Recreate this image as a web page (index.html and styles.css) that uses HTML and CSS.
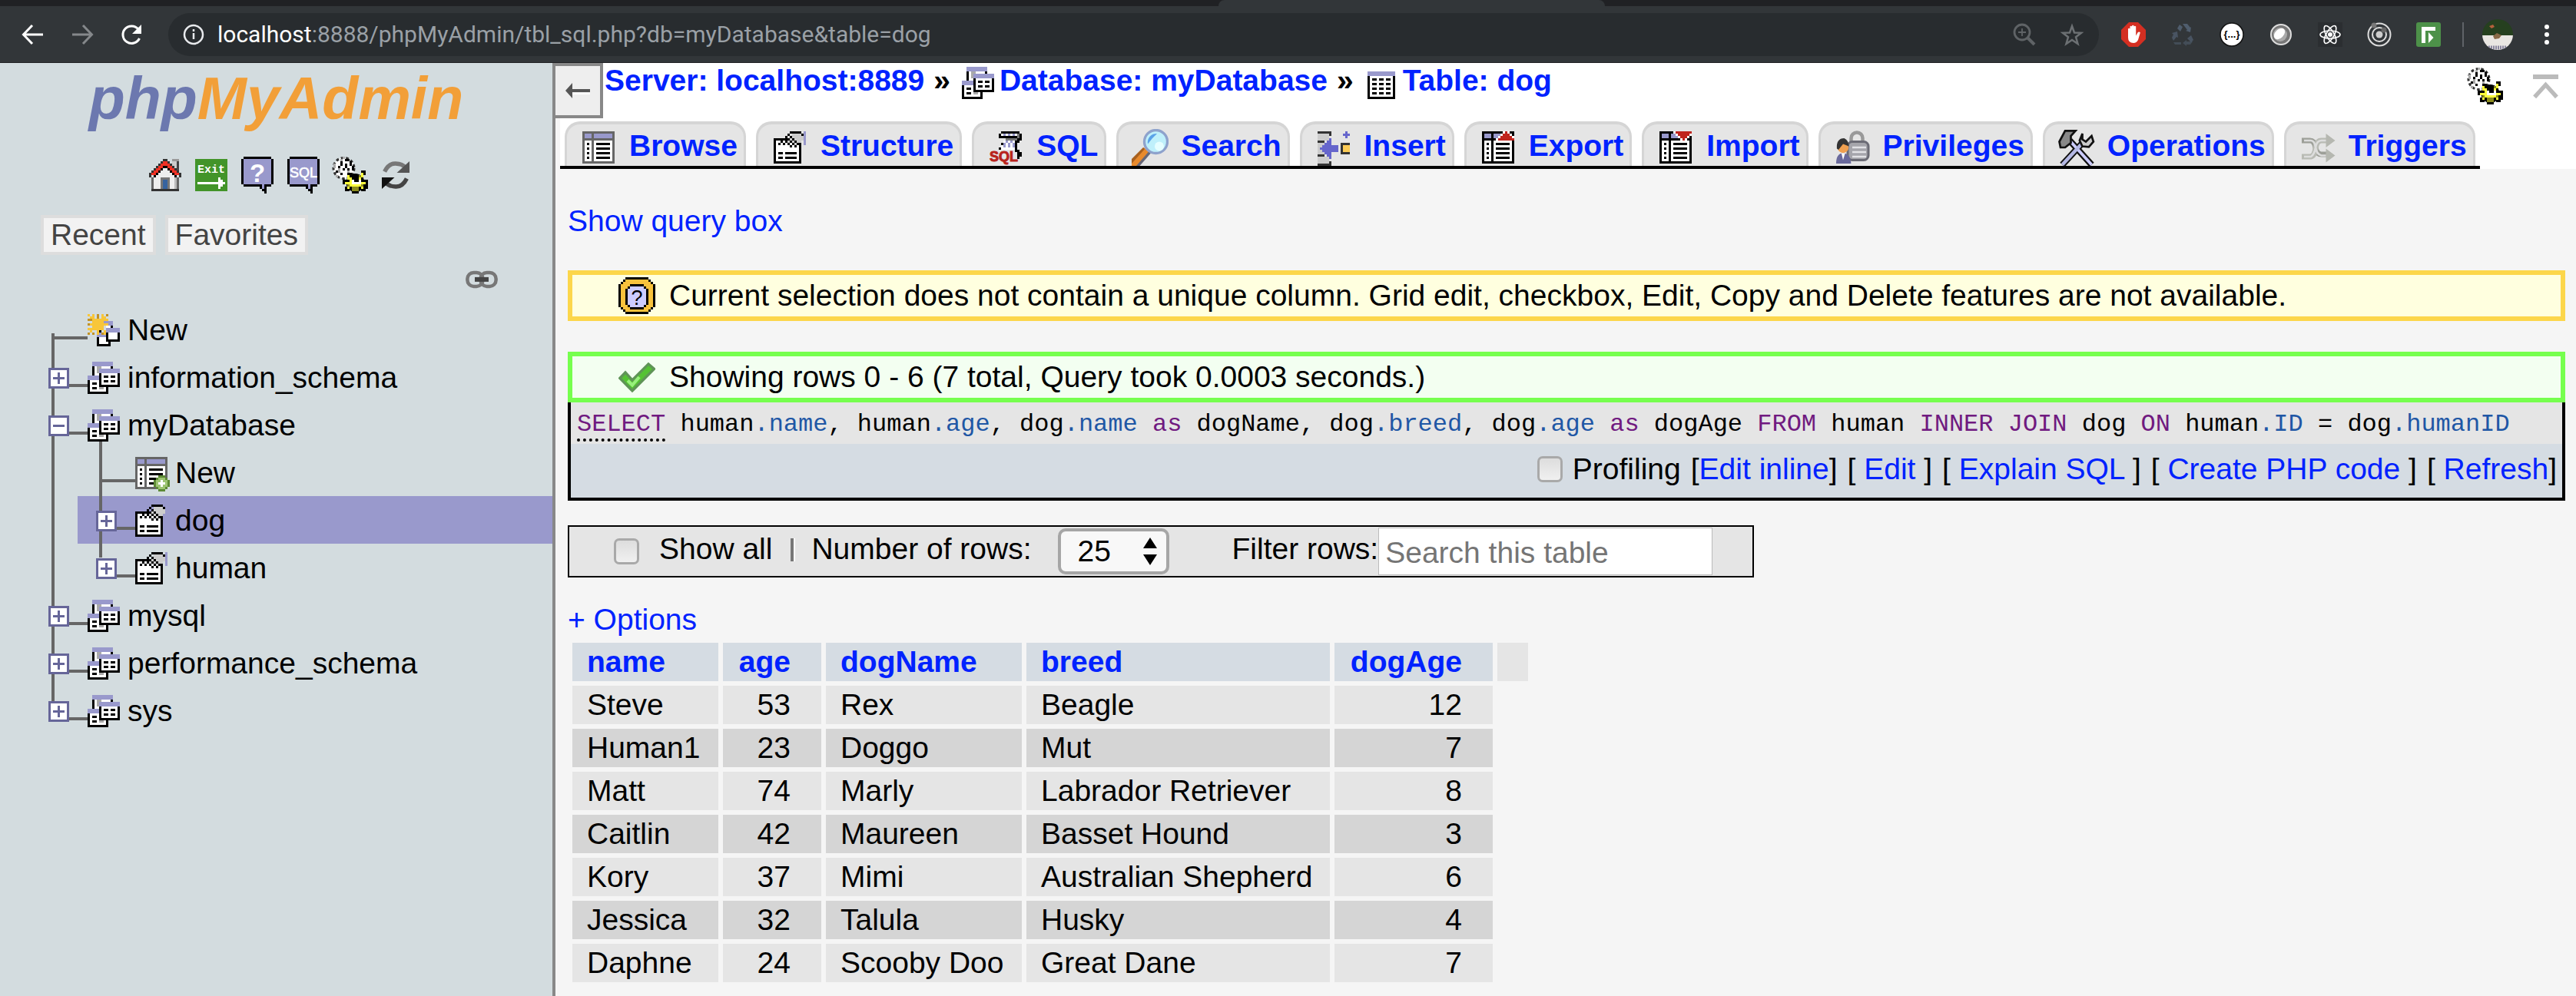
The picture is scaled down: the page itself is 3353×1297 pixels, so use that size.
FILE: index.html
```html
<!DOCTYPE html>
<html lang="en">
<head>
<meta charset="utf-8">
<title>localhost:8889 / myDatabase / dog | phpMyAdmin</title>
<link rel="stylesheet" href="styles.css">
</head>
<body>
<svg class="sprites" aria-hidden="true" shape-rendering="crispEdges">
  <symbol id="i-db" viewBox="0 0 16 16">
    <path fill="#000" d="M3 3h9v5H3zM1 9h9v6H1z"/>
    <path fill="#fff" d="M4 3h7v5H4z"/>
    <path fill="#aaa" d="M5 3h2v1H6v2H5z"/>
    <path fill="#fff" d="M2 9h7v5H2z"/>
    <path fill="#99c" d="M3 1h9v2H3zM1 7h5v2H1z"/>
    <path fill="#aaa" d="M6 11h2v2H6z"/>
    <path d="M3 10h2v1H3zM3 12h2v1H3zM6 6h9v6H6z"/>
    <path fill="#fff" d="M7 6h7v5H7z"/>
    <path fill="#99c" d="M6 4h9v2H6z"/>
    <path d="M8 7h2v1H8zM11 7h2v1h-2zM8 9h2v1H8zM11 9h2v1h-2z"/>
  </symbol>
  <symbol id="i-newdb" viewBox="0 0 16 16">
    <path fill="#99c" d="M8 4h4v2H8zM5 9h5v2H5z"/>
    <path d="M11 6h1v1h-1zM5 11h6v4H5z"/>
    <path fill="#fff" d="M9 6h2v1H9zM6 11h4v3H6z"/>
    <path d="M9 8h6v5H9z"/>
    <path fill="#fff" d="M10 9h4v3h-4z"/>
    <path fill="#99c" d="M9 7h6v2H9z"/>
    <path fill="#f8c63a" d="M3 3h5v5H3zM5 1h1v9H5zM1 5h9v1H1zM1 1h1v1H1zM2 2h1v1H2zM8 2h1v1H8zM2 8h1v1H2zM8 8h1v2H8zM3 1h1v2H3zM7 1h1v2H7zM1 7h2v1H1zM8 3h2v1H8z"/>
    <path fill="#c29224" d="M9 1h1v1H9zM1 3h2v1H1zM1 9h1v1H1zM3 9h1v1H3zM7 9h1v1H7zM5 1h1v2H5zM1 5h1v1H1z"/>
    <path d="M6 8h1v1H6z"/>
  </symbol>
  <symbol id="i-grid" viewBox="0 0 16 16">
    <path fill="#666" d="M1 1h14v14H1z"/>
    <path fill="#99c" d="M2 2h3v2H2zM6 2h8v2H6z"/>
    <path fill="#fff" d="M2 5h3v9H2zM6 5h8v9H6z"/>
    <path d="M3 6h1v1H3zM3 8h1v1H3zM3 10h1v1H3zM3 12h1v1H3zM7 6h6v1H7zM7 8h6v1H7zM7 10h6v1H7zM7 12h6v1H7z"/>
  </symbol>
  <symbol id="i-newtbl" viewBox="0 0 16 16">
    <use href="#i-grid"/>
    <path fill="#5d8a35" d="M11 9h3v1h1v1h1v3h-1v1h-1v1h-3v-1h-1v-1H9v-3h1v-1h1z"/>
    <path fill="#9dc472" d="M11 10h3v1h1v3h-1v1h-3v-1h-1v-3h1z"/>
    <path fill="#fff" d="M12 11h1v1h1v1h-1v1h-1v-1h-1v-1h1z"/>
  </symbol>
  <symbol id="i-struct" viewBox="0 0 16 16">
    <path fill="#99c" d="M14 1h1v6h-1z"/>
    <path d="M1 4h12v11H1z"/>
    <path fill="#fff" d="M2 5h10v9H2z"/>
    <path fill="#ccc" d="M9 2h5v3h-1v1h-2v1H9V6H7V4h1V3h1z"/>
    <path d="M8 1h5v1H8zM7 2h1v1H7zM6 3h1v1H6zM13 2h1v1h-1zM5 4h1v1H5zM4 5h1v1H4zM3 6h1v1H3zM6 5h1v1H6zM5 6h1v1H5zM7 4h1v1H7zM8 5h1v1H8zM9 4h1v1H9zM10 5h1v1h-1zM7 6h1v1H7zM9 6h1v1H9zM11 6h1v1h-1zM8 7h1v1H8zM10 7h1v1h-1zM12 6h1v1h-1zM8 3h1v1H8z"/>
    <path d="M3 10h2v1H3zM6 10h5v1H6zM3 12h2v1H3zM6 12h5v1H6z"/>
  </symbol>
  <symbol id="i-table" viewBox="0 0 16 16">
    <path d="M2 4h12v11H2z"/>
    <path fill="#99c" d="M2 3h12v2H2z"/>
    <path fill="#fff" d="M3 5h10v9H3z"/>
    <path d="M4 6h2v1H4zM7 6h2v1H7zM10 6h2v1h-2zM4 8h2v1H4zM7 8h2v1H7zM10 8h2v1h-2zM4 10h2v1H4zM7 10h2v1H7zM10 10h2v1h-2zM4 12h2v1H4zM7 12h2v1H7zM10 12h2v1h-2z"/>
  </symbol>
  <symbol id="i-home" viewBox="0 0 16 16">
    <path fill="#999" d="M11 1h3v1h-3z"/>
    <path fill="#ccc" d="M11 2h2v4h-2z"/>
    <path fill="#444" d="M13 2h1v5h-1z"/>
    <path fill="#eee" d="M7 5h2v1h1v1h1v1h1v1h1v5H3V9h1V8h1V7h1V6h1z"/>
    <path fill="#bbb" d="M12 9h1v5h-1z"/>
    <path fill="#666" d="M2 9h1v5H2zM13 9h1v5h-1z"/>
    <path fill="#333" d="M2 14h12v1H2zM7 1h2v1H7zM6 2h1v1H6zM9 2h1v1H9zM5 3h1v1H5zM10 3h1v1h-1zM4 4h1v1H4zM11 4h1v1h-1zM3 5h1v1H3zM12 5h1v1h-1zM2 6h1v1H2zM13 6h1v1h-1zM1 7h1v2H1zM14 7h1v2h-1z"/>
    <path d="M7 4h2v1H7zM6 5h1v1H6zM9 5h1v1H9zM5 6h1v1H5zM10 6h1v1h-1zM4 7h1v1H4zM11 7h1v1h-1zM3 8h1v1H3zM12 8h1v1h-1z"/>
    <path fill="#ee3124" d="M7 2h2v2H7zM6 3h1v2H6zM9 3h1v2H9zM5 4h1v2H5zM10 4h1v2h-1zM4 5h1v2H4zM11 5h1v2h-1zM3 6h1v2H3zM12 6h1v2h-1zM2 7h1v1H2zM13 7h1v1h-1z"/>
    <path fill="#777" d="M6 9h4v5H6z"/>
    <path fill="#36639f" d="M7 10h2v4H7z"/>
  </symbol>
  <symbol id="i-exit" viewBox="0 0 16 16">
    <path fill="#429429" d="M1 1h14v14H1z"/>
    <text x="2" y="7" font-size="5" font-weight="bold" font-family="Liberation Mono, monospace" fill="#fff">Exit</text>
    <path fill="#fff" d="M2 11h9V9h1v1h1v1h1v1h-1v1h-1v1h-1v-2H2z"/>
  </symbol>
  <symbol id="i-bubble" viewBox="0 0 16 16">
    <path d="M2 0h12v1h1v11h-1v1h-2v3h-1v-1h-1v-1H9v-1H2v-1H1V1h1z"/>
    <path fill="#99c" d="M2 1h12v11h-3v2h-1v-2H2z"/>
  </symbol>
  <symbol id="i-doc" viewBox="0 0 16 16">
    <use href="#i-bubble"/>
    <text x="8" y="11" text-anchor="middle" font-size="11" font-weight="bold" font-family="Liberation Sans, sans-serif" fill="#fff">?</text>
  </symbol>
  <symbol id="i-sqldoc" viewBox="0 0 16 16">
    <use href="#i-bubble"/>
    <text x="8" y="9" text-anchor="middle" font-size="6" font-family="Liberation Sans, sans-serif" fill="#fff" stroke="#fff" stroke-width=".2">SQL</text>
  </symbol>
  <symbol id="i-gears" viewBox="0 0 16 16">
    <circle cx="5.500" cy="5" r="4.500" fill="#fff"/>
    <circle cx="5.500" cy="5" r="4.500" fill="none" stroke="#333" stroke-dasharray="1.200 1"/>
    <path fill="#aaa" d="M5 0h1v1H5zM1 3h1v2H1zM3 5h1v2H3zM4 1h1v1H4zM2 8h1v1H2zM7 6h1v1H7z"/>
    <path d="M4 2h1v2H4zM6 3h1v2H6zM8 2h1v2H8zM3 4h1v1H3zM5 5h1v1H5zM7 1h1v1H7zM2 6h1v1H2zM6 1h1v1H6zM9 4h1v2H9zM4 7h1v1H4zM7 5h1v1H7z"/>
    <circle cx="10.500" cy="11.300" r="4" fill="#000"/>
    <path d="M7 7h2v1h4V6h2v2h-1v2h2v4h-1v1h-2v-1h-1v2H9v-2H8v1H6v-2h1v-1H5v-2h2z"/>
    <path fill="#ffff3c" d="M7 8h1v1h1v1h3V9h1V7h1v2h-1v2h2v1h-2v1h1v1h-1v-1h-1v1h-2v-1H8v1H7v-1h1v-1H6v-1h2v-1H7z"/>
    <path fill="#8c8c1e" d="M9 13h3v2H9zM13 12h1v1h-1zM7 12h1v1H7zM12 8h1v1h-1z"/>
    <path fill="#fff" d="M9 10h1v1h2v-1h1v2H9z"/>
    <path d="M10 9h2v2h-2z"/>
  </symbol>
  <symbol id="i-refresh" viewBox="0 0 16 16">
    <g shape-rendering="geometricPrecision">
      <path d="M3.200 6.500Q5 2.800 8 3t4 1.500" fill="none" stroke="#777" stroke-width="1.800"/>
      <path d="M14 2v5H8.500z" fill="#555"/>
      <path d="M12.800 9.500Q11 13.200 8 13t-4-1.500" fill="none" stroke="#444" stroke-width="1.800"/>
      <path d="M2 9h5.500L2 14z" fill="#111"/>
    </g>
  </symbol>
  <symbol id="i-sql" viewBox="0 0 16 16">
    <path d="M6 1h8v1h1v3h-1v1h-1v3h1v1h1v2h-1v1h-1v-3h-1V7h-1V4H5V2h1z"/>
    <path fill="#fff" d="M6 2h7v1H6zM7 5h5v4H6V7h1z"/>
    <path fill="#777" d="M13 2h1v2h-1zM8 4h5v1H8z"/>
    <path fill="#99c" d="M7 2h1v1H7zM9 2h1v1H9zM11 2h1v1h-1zM8 5h1v1H8zM10 5h1v1h-1zM7 6h1v2H7zM9 6h1v2H9zM11 6h1v2h-1z"/>
    <path d="M6 6h1v1H6zM5 8h1v1H5zM12 5h1v3h-1z"/>
    <text x="1" y="14" font-size="6" font-family="Liberation Sans, sans-serif" fill="#b8231c" stroke="#b8231c" stroke-width=".3">SQL</text>
  </symbol>
  <symbol id="i-search" viewBox="0 0 16 16">
    <g shape-rendering="geometricPrecision">
      <path d="M0 13.500L5.300 8l2.200 2L3 16H0z" fill="#e88a2c"/>
      <path d="M2 16l5.500-6.300 .8 .8L3.500 16z" fill="#667"/>
      <path d="M0 13l5-5 .7 .7L0 15z" fill="#a8601e"/>
      <circle cx="10.500" cy="5.500" r="5" fill="#bff0fb" stroke="#8ea2cc" stroke-width="1.100"/>
      <path d="M7 6.500A3.800 3.800 0 0 1 11 2L9 4z" fill="#5aa2e8"/>
      <circle cx="12" cy="7.500" r="2" fill="#e6feff"/>
    </g>
  </symbol>
  <symbol id="i-insert" viewBox="0 0 16 16">
    <path fill="#ccc" d="M1 2h5v3H1zM1 12h5v3H1zM1 6h5v5H1z"/>
    <path fill="#333" d="M1 1h6v2H6V2H1zM1 5h3v1H1zM1 11h3v1H1zM6 14h1v2H1v-1h5z"/>
    <path fill="#66c" d="M2 8h1V7h1V6h1V5h1V4h1v3h3v3H7v3H6v-1H5v-1H4v-1H3V9H2zM13 1h1v1h1v1h-1v1h-1V3h-1V2h1z"/>
    <path fill="#333" d="M11 6h4v5h-4z"/>
    <path fill="#fbcb55" d="M12 7h3v3h-3z"/>
  </symbol>
  <symbol id="i-port" viewBox="0 0 16 16">
    <path d="M1 1h14v14H1z"/>
    <path fill="#99c" d="M2 2h3v2H2zM6 2h3v2H6z"/>
    <path fill="#fff" d="M2 5h3v9H2zM6 5h8v9H6z"/>
    <path d="M3 6h1v1H3zM3 8h1v1H3zM3 10h1v1H3zM3 12h1v1H3zM7 6h6v1H7zM7 8h6v1H7zM7 10h6v1H7zM7 12h6v1H7z"/>
  </symbol>
  <symbol id="i-export" viewBox="0 0 16 16">
    <use href="#i-port"/>
    <path fill="#fff" d="M8 3h1V2h1V1h3v1h1v1h1v2H7V4h1z"/>
    <path fill="#c0241c" d="M11 1h1v1h1v1h1v1h1v1H8V4h1V3h1V2h1z"/>
  </symbol>
  <symbol id="i-import" viewBox="0 0 16 16">
    <use href="#i-port"/>
    <path fill="#fff" d="M7 1h8v2h-1v1h-1v1h-1v1h-1V5h-1V4H9V3H8V2H7z"/>
    <path fill="#c0241c" d="M8 1h7v1h-1v1h-1v1h-1v1h-1V4h-1V3H9V2H8z"/>
  </symbol>
  <symbol id="i-priv" viewBox="0 0 16 16">
    <g shape-rendering="geometricPrecision">
      <path d="M7.500 6V4a2.500 2.500 0 0 1 5 0v2" fill="none" stroke="#999" stroke-width="1.500"/>
      <rect x="6" y="5.500" width="9" height="8" rx="2" fill="#a5a5ab" stroke="#6b6b75"/>
      <path d="M8 8h6M8 10h6M8 12h6" stroke="#e2e2e6" stroke-width=".8"/>
      <circle cx="4" cy="8" r="2.400" fill="#f0a050"/>
      <path d="M1.300 8.500Q1 4 4.500 4 6.500 5 6.500 7.500L4 6.500 2 9z" fill="#333"/>
      <path d="M1 15q0-4.500 3-4.500T7.500 15z" fill="#6a6a9c"/>
      <path d="M3.300 10.500h1.600L4 13.500z" fill="#fff"/>
    </g>
  </symbol>
  <symbol id="i-ops" viewBox="0 0 16 16">
    <g shape-rendering="geometricPrecision">
      <path d="M5 5l9.500 10.500M11.500 5L1.800 15.500" stroke="#111" stroke-width="2.800"/>
      <path d="M5 5l9.500 10.500" stroke="#ccf" stroke-width="1.300"/>
      <path d="M11.500 5L1.800 15.500" stroke="#b4b8e4" stroke-width="1.500"/>
      <path d="M.5 5.500L3 .8h4.500L5.500 3v3L3 8H1z" fill="#888" stroke="#111" stroke-width=".9"/>
      <path d="M10.500 2v2.500l1.500 1 2.500-2.500 .8 2.500-2 2.300-2.800-.3-1.200-2.500z" fill="#ccc" stroke="#111" stroke-width=".9"/>
    </g>
  </symbol>
  <symbol id="i-trig" viewBox="0 0 16 16">
    <g shape-rendering="geometricPrecision" fill="none" stroke="#9d9f98" stroke-width="2.400">
      <path d="M1 5h3.500q2 0 2.500 3t2.500 3H12"/>
      <path stroke="#b9bbb4" d="M1 12h3.500Q6.500 12 7 8.500T9.500 5H12"/>
      <path fill="#b5b7b0" stroke="none" d="M11.500 2l4 3-4 3zM11.500 8.500l4 3-4 3z"/>
      <path stroke="#ddd" stroke-width=".9" d="M2 5h3q1.500 0 2 3t2.500 3.500h2M2 12h3Q6.500 11 7 8t2.500-3h2"/>
    </g>
  </symbol>
  <symbol id="i-notice" viewBox="0 0 16 16">
    <path d="M3 0h10v1h1v1h1v1h1v10h-1v1h-1v1h-1v1H3v-1H2v-1H1v-1H0V3h1V2h1V1h1z"/>
    <path fill="#f8c23c" d="M3 1h10v1h1v1h1v10h-1v1h-1v1H3v-1H2v-1H1V3h1V2h1z"/>
    <path d="M5 3h6v1h1v1h1v7h-1v1h-1v1H5v-1H4v-1H3V5h1V4h1z"/>
    <path fill="#ccf" d="M5 4h6v1h1v7h-1v1H5v-1H4V5h1z"/>
    <text x="8" y="12" text-anchor="middle" font-size="9" font-family="Liberation Sans, sans-serif">?</text>
  </symbol>
  <symbol id="i-ok" viewBox="0 0 16 16">
    <g shape-rendering="geometricPrecision">
      <path d="M.6 8.500L3 6l3 3.300L13 2.300l2.500 2.200L6 14z" fill="#55c234" stroke="#5f9457" stroke-width="1.100"/>
      <path d="M4 9.500l2 2 3-3.500" fill="none" stroke="#98f07c" stroke-width="1.400"/>
    </g>
  </symbol>
  <symbol id="i-link" viewBox="0 0 16 16">
    <g shape-rendering="geometricPrecision" fill="none">
      <rect x="1.800" y="5.300" width="6.700" height="6" rx="2.700" stroke="#777" stroke-width="1.500"/>
      <rect x="7.500" y="5.300" width="6.700" height="6" rx="2.700" stroke="#777" stroke-width="1.500"/>
      <path d="M5 8.300h6" stroke="#444" stroke-width="2"/>
    </g>
  </symbol>
  <symbol id="i-top" viewBox="0 0 12 12">
    <path fill="#bbb" d="M0 1h11v2H0z"/>
    <path d="M.7 10.800L5.500 5.500l4.800 5.300" fill="none" stroke="#bbb" stroke-width="1.800" shape-rendering="geometricPrecision"/>
  </symbol>
</svg>

<header class="browser">
  <div class="tabstrip"><span class="active-tab"></span></div>
  <div class="toolbar">
    <button class="nav-btn" aria-label="Back"><svg viewBox="0 0 32 32"><path d="M29 16H4M15 4L3.500 16 15 28" fill="none" stroke="#fff" stroke-width="3"/></svg></button>
    <button class="nav-btn" aria-label="Forward"><svg viewBox="0 0 32 32"><path d="M3 16h25M17 4l11.500 12L17 28" fill="none" stroke="#85888b" stroke-width="3"/></svg></button>
    <button class="nav-btn" aria-label="Reload"><svg viewBox="0 0 32 32"><path d="M26.500 21A11.300 11.300 0 1 1 25 9" fill="none" stroke="#fff" stroke-width="3"/><path d="M29 3v12H17z" fill="#fff"/></svg></button>
    <div class="address">
      <svg class="ico32" viewBox="0 0 32 32"><circle cx="16" cy="16" r="12" fill="none" stroke="#e8eaed" stroke-width="2.500"/><path d="M16 14v8M16 9v3" stroke="#e8eaed" stroke-width="2.500"/></svg>
      <span class="url"><b>localhost</b>:8888/phpMyAdmin/tbl_sql.php?db=myDatabase&amp;table=dog</span>
      <svg class="ico32 zoomed" viewBox="0 0 32 32"><g fill="none" stroke="#5f6366" stroke-width="2.800"><circle cx="13" cy="13" r="10"/><path d="M20 20l9 9" stroke-width="4"/><path d="M13 8v10M8 13h10" stroke-width="1.800"/></g></svg>
      <svg class="ico32" viewBox="0 0 32 32"><path d="M16 5l3 8.500 9 .3-7 5.500 2.500 8.700-7.500-5-7.500 5 2.500-8.700-7-5.500 9-.3z" fill="none" stroke="#6c7073" stroke-width="2.500"/></svg>
    </div>
    <div class="exts">
      <svg viewBox="0 0 32 32"><path d="M10 0h12l10 10v12L22 32H10L0 22V10z" fill="#d42f22"/><path d="M9 8.500q1.300-1.300 2.500 0V5.500q1.300-1.500 2.500 0v-1q1.300-1.500 2.600 0v1q1.300-1.300 2.600 0v12l2.600-4.500q2-1 3 .5L22 23q-2 4-6 4-7 0-7-7z" fill="#fff"/></svg>
      <svg viewBox="0 0 32 32"><g fill="#4f5d6d"><path d="M9 8l3-5 4 3-3 6zM16 2h6l4 5 1-1-1 7-6-2 2-1z"/><path d="M2 14l7-2 1 8-2-1-4 5-2-4 2-4zM27 17l3 6-3 3-5-5z" opacity=".8"/><path d="M4 26h10v3H6zM16 27l5-4v2h8l-3 4h-5v2z" opacity=".6"/></g></svg>
      <svg viewBox="0 0 32 32"><circle cx="16" cy="16" r="15" fill="#fff" stroke="#111" stroke-width="1.500"/><text x="16" y="20" text-anchor="middle" font-size="13" font-weight="bold" font-family="Liberation Sans, sans-serif">{...}</text></svg>
      <svg viewBox="0 0 32 32"><circle cx="16" cy="16" r="13" fill="#777" stroke="#ddd" stroke-width="2"/><circle cx="15" cy="16" r="9" fill="#aaa"/><ellipse cx="14" cy="15" rx="5.500" ry="8.500" transform="rotate(45 14 15)" fill="#fff"/></svg>
      <svg viewBox="0 0 32 32"><path d="M0 0h32v32H0z" fill="#2b2e31"/><g fill="none" stroke="#fff" stroke-width="1.600"><ellipse cx="16" cy="16" rx="13" ry="5"/><ellipse cx="16" cy="16" rx="13" ry="5" transform="rotate(60 16 16)"/><ellipse cx="16" cy="16" rx="13" ry="5" transform="rotate(120 16 16)"/></g><circle cx="16" cy="16" r="3" fill="#fff"/></svg>
      <svg viewBox="0 0 32 32"><g fill="none" stroke="#ddd" stroke-width="2"><circle cx="16" cy="16" r="14.500"/><circle cx="16" cy="16" r="9"/></g><circle cx="16" cy="16" r="4.500" fill="#ccc"/><circle cx="9" cy="4" r="3.500" fill="#777"/><circle cx="22" cy="10" r="3.500" fill="#666"/></svg>
      <svg viewBox="0 0 32 32"><rect width="32" height="32" rx="3" fill="#4d9149"/><path d="M7 6h18v5H12v16H7z" fill="#fff"/><path d="M16 13l6.500 7-6.500 7z" fill="#fff"/></svg>
    </div>
    <span class="bar-divider"></span>
    <svg class="avatar" viewBox="0 0 40 40"><clipPath id="av"><circle cx="20" cy="20" r="20"/></clipPath><g clip-path="url(#av)"><path fill="#26401f" d="M0 0h40v22H0z"/><path fill="#e9e6e2" d="M0 21h40v19H0z"/><path fill="#b5603c" d="M9 9l5-2 2 3-4 2z"/><path fill="#8a6a48" d="M14 22l5-4 6 3-3 4-6 1z"/><path d="M8 37h24" stroke="#8b88a0" stroke-width="5" stroke-dasharray="2 1"/></g></svg>
    <button class="nav-btn" aria-label="Menu"><svg viewBox="0 0 32 32"><g fill="#fff"><circle cx="16" cy="6" r="3"/><circle cx="16" cy="16" r="3"/><circle cx="16" cy="26" r="3"/></g></svg></button>
  </div>
</header>

<div class="app">
  <aside class="sidebar">
    <a class="logo" href="#"><span>php</span>MyAdmin</a>
    <div class="quick">
      <a href="#" aria-label="Home"><svg class="ico"><use href="#i-home"/></svg></a>
      <a href="#" aria-label="Log out"><svg class="ico"><use href="#i-exit"/></svg></a>
      <a href="#" aria-label="Documentation"><svg class="ico"><use href="#i-doc"/></svg></a>
      <a href="#" aria-label="SQL documentation"><svg class="ico"><use href="#i-sqldoc"/></svg></a>
      <a href="#" aria-label="Settings"><svg class="ico"><use href="#i-gears"/></svg></a>
      <a href="#" aria-label="Reload navigation"><svg class="ico"><use href="#i-refresh"/></svg></a>
    </div>
    <div class="shortcuts">
      <button>Recent</button>
      <button>Favorites</button>
    </div>
    <div class="link-row"><svg class="ico"><use href="#i-link"/></svg></div>
    <ul class="tree">
      <li class="first"><div class="row plain"><span class="branch"></span><svg class="ico"><use href="#i-newdb"/></svg><a href="#">New</a></div></li>
      <li><div class="row"><button class="toggle" aria-label="Expand"></button><span class="branch"></span><svg class="ico"><use href="#i-db"/></svg><a href="#">information_schema</a></div></li>
      <li>
        <div class="row open"><button class="toggle minus" aria-label="Collapse"></button><span class="branch"></span><svg class="ico"><use href="#i-db"/></svg><a href="#">myDatabase</a></div>
        <ul class="subtree">
          <li><div class="row plain"><span class="branch"></span><svg class="ico"><use href="#i-newtbl"/></svg><a href="#">New</a></div></li>
          <li class="selected"><div class="row"><button class="toggle" aria-label="Expand"></button><span class="branch"></span><svg class="ico"><use href="#i-struct"/></svg><a href="#">dog</a></div></li>
          <li class="last"><div class="row"><button class="toggle" aria-label="Expand"></button><span class="branch"></span><svg class="ico"><use href="#i-struct"/></svg><a href="#">human</a></div></li>
        </ul>
      </li>
      <li><div class="row"><button class="toggle" aria-label="Expand"></button><span class="branch"></span><svg class="ico"><use href="#i-db"/></svg><a href="#">mysql</a></div></li>
      <li><div class="row"><button class="toggle" aria-label="Expand"></button><span class="branch"></span><svg class="ico"><use href="#i-db"/></svg><a href="#">performance_schema</a></div></li>
      <li class="last"><div class="row"><button class="toggle" aria-label="Expand"></button><span class="branch"></span><svg class="ico"><use href="#i-db"/></svg><a href="#">sys</a></div></li>
    </ul>
  </aside>

  <main class="main">
    <div class="head">
      <div class="crumb-row">
        <button class="collapse" aria-label="Hide panel"><svg viewBox="0 0 32 24"><path d="M9 15h23v2H9z" fill="#fff"/><path d="M0 12L9 2v8h23v4H9v8z" fill="#555"/></svg></button>
        <nav class="crumbs">
          <a href="#">Server: localhost:8889</a><span class="sep">»</span>
          <svg class="ico"><use href="#i-db"/></svg><a href="#">Database: myDatabase</a><span class="sep">»</span>
          <svg class="ico"><use href="#i-table"/></svg><a href="#">Table: dog</a>
        </nav>
        <div class="page-tools">
          <a href="#" aria-label="Page settings"><svg class="ico"><use href="#i-gears"/></svg></a>
          <a href="#" aria-label="Back to top"><svg class="ico36"><use href="#i-top"/></svg></a>
        </div>
      </div>
      <nav class="tabs">
        <a href="#"><svg class="ico"><use href="#i-grid"/></svg>Browse</a>
        <a href="#"><svg class="ico"><use href="#i-struct"/></svg>Structure</a>
        <a href="#"><svg class="ico"><use href="#i-sql"/></svg>SQL</a>
        <a href="#"><svg class="ico"><use href="#i-search"/></svg>Search</a>
        <a href="#"><svg class="ico"><use href="#i-insert"/></svg>Insert</a>
        <a href="#"><svg class="ico"><use href="#i-export"/></svg>Export</a>
        <a href="#"><svg class="ico"><use href="#i-import"/></svg>Import</a>
        <a href="#"><svg class="ico"><use href="#i-priv"/></svg>Privileges</a>
        <a href="#"><svg class="ico"><use href="#i-ops"/></svg>Operations</a>
        <a href="#"><svg class="ico"><use href="#i-trig"/></svg>Triggers</a>
      </nav>
    </div>

    <div class="content">
      <p class="line"><a href="#">Show query box</a></p>
      <div class="msg notice"><svg class="ico"><use href="#i-notice"/></svg>Current selection does not contain a unique column. Grid edit, checkbox, Edit, Copy and Delete features are not available.</div>
      <div class="msg success"><svg class="ico"><use href="#i-ok"/></svg>Showing rows 0 - 6 (7 total, Query took 0.0003 seconds.)</div>
      <div class="sql">
        <code><i class="kw doc">SELECT</i> human<i>.name</i>, human<i>.age</i>, dog<i>.name</i> <i class="kw">as</i> dogName, dog<i>.breed</i>, dog<i>.age</i> <i class="kw">as</i> dogAge <i class="kw">FROM</i> human <i class="kw">INNER</i> <i class="kw">JOIN</i> dog <i class="kw">ON</i> human<i>.ID</i> = dog<i>.humanID</i></code>
        <div class="sql-tools">
          <input type="checkbox" id="profiling"><label for="profiling">Profiling</label>
          <span>[<a href="#">Edit inline</a>]</span>
          <span>[ <a href="#">Edit</a> ]</span>
          <span>[ <a href="#">Explain SQL</a> ]</span>
          <span>[ <a href="#">Create PHP code</a> ]</span>
          <span>[ <a href="#">Refresh</a>]</span>
        </div>
      </div>

      <form class="rows-bar">
        <input type="checkbox" id="all"><label class="all" for="all">Show all</label>
        <span class="pipe"></span>
        <label for="num">Number of rows:</label>
        <div class="picker"><select id="num"><option>25</option></select><svg viewBox="0 0 18 36"><path d="M9 0l9 14H0zM9 36L0 22h18z"/></svg></div>
        <label class="filter" for="filter">Filter rows:</label>
        <input type="text" id="filter" placeholder="Search this table">
      </form>

      <p class="line options"><a href="#">+ Options</a></p>
      <table class="results">
        <colgroup><col class="c-name"><col class="c-age"><col class="c-dog"><col class="c-breed"><col class="c-dogage"><col class="c-end"></colgroup>
        <thead><tr><th><a href="#">name</a></th><th class="num"><a href="#">age</a></th><th><a href="#">dogName</a></th><th><a href="#">breed</a></th><th class="num"><a href="#">dogAge</a></th><td></td></tr></thead>
        <tbody>
          <tr><td>Steve</td><td class="num">53</td><td>Rex</td><td>Beagle</td><td class="num">12</td></tr>
          <tr><td>Human1</td><td class="num">23</td><td>Doggo</td><td>Mut</td><td class="num">7</td></tr>
          <tr><td>Matt</td><td class="num">74</td><td>Marly</td><td>Labrador Retriever</td><td class="num">8</td></tr>
          <tr><td>Caitlin</td><td class="num">42</td><td>Maureen</td><td>Basset Hound</td><td class="num">3</td></tr>
          <tr><td>Kory</td><td class="num">37</td><td>Mimi</td><td>Australian Shepherd</td><td class="num">6</td></tr>
          <tr><td>Jessica</td><td class="num">32</td><td>Talula</td><td>Husky</td><td class="num">4</td></tr>
          <tr><td>Daphne</td><td class="num">24</td><td>Scooby Doo</td><td>Great Dane</td><td class="num">7</td></tr>
        </tbody>
      </table>
    </div>
  </main>
</div>
</body>
</html>
```
FILE: styles.css
```css
* { box-sizing: border-box; }

body {
  margin: 0;
  min-height: 100vh;
  display: flex;
  flex-direction: column;
  background: #f5f5f5;
  color: #000;
  font: 39px/46px "Liberation Sans", Arial, sans-serif;
}

a { color: #0022ff; text-decoration: none; }
p { margin: 0; }
button, input, select { font: inherit; margin: 0; }
ul { list-style: none; margin: 0; padding: 0; }

.sprites { display: none; }
.ico { width: 48px; height: 48px; flex: none; display: block; }
.ico36 { width: 36px; height: 36px; display: block; }
.ico32 { width: 32px; height: 32px; flex: none; }

/* Browser chrome */
.browser { background: #323639; border-bottom: 1px solid #202124; }
.tabstrip { height: 8px; background: #202124; display: flex; }
.active-tab { margin-left: 47.3%; width: 15%; background: #323639; border-radius: 8px 8px 0 0; }
.toolbar { height: 73px; padding: 0 22px 0 27px; display: flex; align-items: center; }
.nav-btn { width: 32px; height: 32px; padding: 0; border: 0; background: none; flex: none; margin-right: 32px; }
.nav-btn svg { display: block; width: 32px; height: 32px; }
.toolbar .nav-btn:last-child { margin: 0; }
.address {
  flex: 1;
  height: 56px;
  padding: 0 19px 0 17px;
  border-radius: 28px;
  background: #282c2f;
  display: flex;
  align-items: center;
}
.url { margin-left: 15px; font: 30px/56px Roboto, sans-serif; color: #9aa0a6; white-space: nowrap; }
.url b { font-weight: 400; color: #fff; }
.zoomed { margin-left: auto; margin-right: 30px; }
.exts { display: flex; gap: 32px; margin-left: 29px; }
.exts svg { width: 32px; height: 32px; }
.bar-divider { width: 2px; height: 32px; background: #5f6368; margin: 0 24px 0 28px; }
.avatar { width: 40px; height: 40px; margin-right: 28px; }

/* Frame */
.app { flex: 1; display: flex; }
.sidebar { width: 723px; flex: none; background: #d3dcdf; border-right: 4px solid #888; }
.main { flex: 1; min-width: 0; }

/* Sidebar */
.logo {
  display: block;
  padding-top: 6px;
  text-align: center;
  font: italic bold 77px/80px "Liberation Sans", Arial, sans-serif;
  color: #f29f38;
}
.logo span { color: #6c78af; }
.quick { display: flex; gap: 12px; justify-content: center; padding: 36px 0 28px 10px; }
.shortcuts { display: flex; gap: 12px; padding-left: 53px; }
.shortcuts button {
  height: 52px;
  padding: 0 9px;
  border: 4px solid #ddd;
  background: #f2f2f2;
  color: #444;
  line-height: 44px;
}
.link-row { display: flex; justify-content: flex-end; padding: 7px 68px 11px 0; }

.tree > li { background: linear-gradient(#666, #666) 67px 0 / 4px 100% no-repeat; }
.tree > .first { background-position: 67px 36px; }
.tree > .last { background-size: 4px 36px; }
.row { height: 62px; padding: 2px 0 0 63px; display: flex; align-items: center; }
.row a { color: #000; margin-left: 7px; }
.row .ico { margin-left: -3px; }
.branch { width: 24px; height: 4px; margin-top: 20px; background: #666; }
.tree > li > .plain { padding-left: 67px; }
.tree > li > .plain .branch { width: 47px; }
.open { background: linear-gradient(#666, #666) 129px 52px / 4px 10px no-repeat; }
.toggle {
  width: 27px;
  height: 27px;
  padding: 0;
  border: 3px solid #669;
  background:
    linear-gradient(#669, #669) center / 15px 3px no-repeat,
    linear-gradient(#669, #669) center / 3px 15px no-repeat,
    #fff;
}
.minus { background: linear-gradient(#669, #669) center / 15px 3px no-repeat, #fff; }
.subtree { margin-left: 101px; }
.subtree .row { padding-left: 24px; background: linear-gradient(#666, #666) 28px 0 / 4px 100% no-repeat; }
.subtree .last .row { background-size: 4px 18px; }
.subtree .plain { padding-left: 28px; }
.subtree .plain .branch { width: 47px; }
.selected { background: #99c; }

/* Page header */
.head { margin-left: 6px; background: #fff; }
.crumb-row { height: 76px; display: flex; align-items: flex-start; }
.collapse {
  width: 66px;
  height: 72px;
  margin-left: -10px;
  padding: 0;
  border: 4px solid #888;
  background: #eee;
  display: flex;
  align-items: center;
  justify-content: center;
}
.collapse svg { width: 32px; height: 24px; }
.crumbs { display: flex; margin-left: 2px; font-weight: bold; line-height: 45px; }
.crumbs .ico { margin-top: 2px; margin-right: 4px; }
.sep { margin: 0 12px; }
.page-tools { margin-left: auto; padding: 6px 20px 0 0; display: flex; gap: 39px; align-items: center; }
.tabs { display: inline-flex; gap: 13px; padding: 0 6px; border-bottom: 4px solid #000; vertical-align: top; }
.tabs a {
  height: 58px;
  padding: 0 8px 0 17px;
  display: flex;
  gap: 16px;
  align-items: flex-end;
  border: 3px solid #d5d5d5;
  border-top-width: 4px;
  border-bottom: 0;
  border-radius: 20px 20px 0 0;
  background: #e5e5e5;
  font-weight: bold;
  line-height: 52px;
}

/* Content */
.content { padding: 45px 14px 13px 16px; }
.line { height: 46px; }
.msg {
  margin-top: 41px;
  padding-left: 60px;
  border: 6px solid;
  display: flex;
  gap: 18px;
  align-items: center;
  line-height: 54px;
}
.success { margin-top: 40px; }
.notice { border-color: #fcd64b; background: #ffffdf; }
.success { border-color: #76ff4e; background: #f3fff1; }
.sql { border: 4px solid #000; border-top: 0; background: #e5e5e5; }
.sql code { display: block; padding: 4px 0 0 8px; font: 32px/50px "Liberation Mono", "Courier New", monospace; white-space: nowrap; }
.sql i { font-style: normal; color: #1f57a5; }
.sql .kw { color: #701a80; }
.sql .doc { border-bottom: 4px dotted #000; }
.sql-tools {
  height: 70px;
  padding: 0 7px 5px 0;
  background: #d5dce3;
  display: flex;
  gap: 13px;
  justify-content: flex-end;
  align-items: center;
}

input[type="checkbox"] {
  appearance: none;
  width: 33px;
  height: 34px;
  flex: none;
  border: 3px solid #a9a9a9;
  border-radius: 7px;
  background: linear-gradient(#ddd, #f0f0f0);
}

.rows-bar {
  width: 1544px;
  height: 68px;
  margin: 32px 0;
  padding-left: 58px;
  border: 2px solid #000;
  background: #e5e5e5;
  display: flex;
  align-items: center;
}
.rows-bar label { padding-bottom: 6px; white-space: nowrap; }
.rows-bar .all { margin-left: 26px; }
.pipe { width: 6px; height: 30px; margin: 0 21px 4px 24px; background: #fff; border-left: 4px solid #777; }
.picker {
  width: 145px;
  height: 60px;
  margin-left: 34px;
  border: 4px solid #a6a6a6;
  border-radius: 10px;
  background: #f8f8f8;
  display: flex;
  align-items: center;
  padding: 0 12px 0 22px;
}
.picker select { flex: 1; min-width: 0; padding: 0; appearance: none; border: 0; background: none; color: #000; }
.picker svg { width: 18px; height: 36px; }
.filter { margin-left: 82px; }
#filter {
  width: 435px;
  height: 62px;
  padding: 4px 8px 0;
  border: 1px solid #bbb;
  background: #fff;
}
#filter::placeholder { color: #757575; opacity: 1; }
.options { height: 47px; }

.results { table-layout: fixed; width: 1256px; border-collapse: separate; border-spacing: 6px; }
.results th, .results td { height: 50px; padding: 0 0 0 19px; line-height: 50px; text-align: left; white-space: nowrap; }
.results .num { padding: 0 40px 0 0; text-align: right; }
.results th { background: #d5dce3; }
.results td { background: #e5e5e5; }
.results tbody tr:nth-child(even) td { background: #d5d5d5; }
.c-name { width: 190px; }
.c-age { width: 128px; }
.c-dog { width: 255px; }
.c-breed { width: 395px; }
.c-dogage { width: 206px; }
.c-end { width: 40px; }
```
